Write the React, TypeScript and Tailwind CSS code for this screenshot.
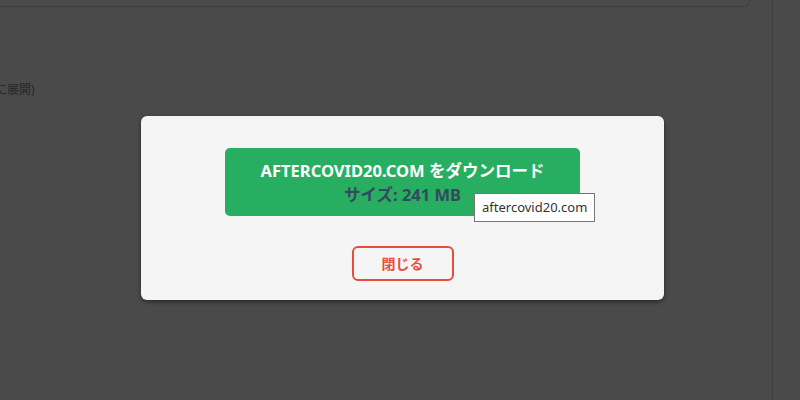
export default function App() {
  return (
    <div
      className="relative h-[400px] w-[800px] overflow-hidden bg-[#4a4a4a]"
      style={{ fontFamily: '"Noto Sans", "Noto Sans CJK JP", sans-serif' }}
    >
      {/* page behind the overlay */}
      <div className="flex h-full">
        <div className="flex w-[772px] flex-col">
          <div className="h-[7px] w-[750px] rounded-br-[6px] border-b border-r border-[#3e3e3e]"></div>
          <p className="mt-[75px] -ml-[5px] text-[12px] leading-4 text-[#262626]">に展開)</p>
        </div>
        <div className="flex-1 border-l border-[#3f3f3f]"></div>
      </div>

      {/* modal */}
      <div className="absolute left-[141px] top-[116px] flex h-[184px] w-[523px] flex-col items-center rounded-[6px] bg-[#f5f5f5] pt-[32px] shadow-[0_2px_4px_rgba(0,0,0,0.45)]">
        <button className="relative flex h-[68px] w-[355px] flex-col items-center justify-center rounded-[5px] bg-[#27ae60] pt-[1px]">
          <span className="text-[16.5px] font-bold leading-[24px] text-white">
            AFTERCOVID20.COM をダウンロード
          </span>
          <span className="text-[16.5px] font-bold leading-[24px] text-[#34495e]">
            サイズ: 241 MB
          </span>
          {/* tooltip */}
          <span className="absolute left-[249px] top-[45px] whitespace-nowrap border border-[#767676] bg-white px-[7px] py-[4px] text-[13px] leading-[19px] text-[#333]">
            aftercovid20.com
          </span>
        </button>
        <button className="mt-[30px] flex h-[35px] w-[102px] items-center justify-center rounded-[6px] border-2 border-[#e74c3c] text-[14px] font-bold text-[#e74c3c]">
          閉じる
        </button>
      </div>
    </div>
  );
}
